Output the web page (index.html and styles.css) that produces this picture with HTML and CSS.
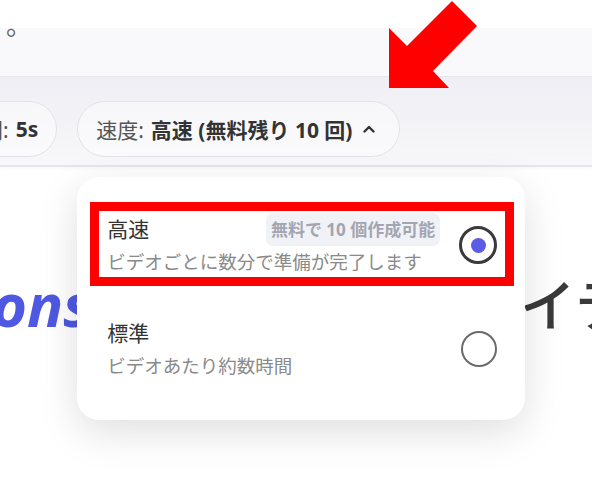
FILE: index.html
```html
<!DOCTYPE html>
<html>
<head>
  <link rel="stylesheet" href="styles.css">
</head>
<body>
  <div class="top"></div>
  <div class="note">
    <p>。</p>
  </div>

  <div class="toolbar">
    <div class="pill pill-first">
      <span class="pill-label">時間:</span>
      <b>5s</b>
    </div>
    <div class="speed-wrap">
      <button class="pill pill-speed" type="button">
        <span class="pill-label">速度:</span>
        <b>高速 (無料残り 10 回)</b>
        <svg class="caret" width="12" height="8" viewBox="0 0 12 8">
          <path d="M1.5 6.5 L6 2 L10.5 6.5" fill="none" stroke="#333" stroke-width="2.4" stroke-linecap="round" stroke-linejoin="round"/>
        </svg>
      </button>

      <div class="menu">
        <div class="option option-marked">
          <div class="option-text">
            <div class="option-head">
              <span class="option-title">高速</span>
              <span class="badge">無料で 10 個作成可能</span>
            </div>
            <div class="option-desc">ビデオごとに数分で準備が完了します</div>
          </div>
          <span class="radio radio-on"></span>
        </div>
        <div class="option">
          <div class="option-text">
            <div class="option-head">
              <span class="option-title">標準</span>
            </div>
            <div class="option-desc">ビデオあたり約数時間</div>
          </div>
          <span class="radio"></span>
        </div>
      </div>
    </div>
  </div>

  <div class="hero">
    <h1><span class="hero-brand">ons</span><span class="hero-rest">イテ</span></h1>
  </div>

  <svg class="arrow" width="592" height="100" viewBox="0 0 592 100">
    <polygon points="389,28 407,46 452,1 477,26 433,71 449,88 389,88" fill="#ff0000"/>
  </svg>
</body>
</html>
```

FILE: styles.css
```css
body {
  margin: 0;
  width: 592px;
  height: 480px;
  overflow: hidden;
  position: relative;
  background: #fff;
  font-family: "Noto Sans", "Noto Sans CJK JP", sans-serif;
  color: #333;
}

.top {
  height: 28px;
  background: #fff;
}

.note {
  height: 48px;
  background: #f9f9fb;
}

.note p {
  margin: 0;
  padding: 0 0 0 6px;
  font-size: 26px;
  line-height: 26px;
  color: #666;
  position: relative;
  top: -16px;
}

.toolbar {
  display: flex;
  gap: 20px;
  padding: 24px 0 8px;
  border-top: 1px solid #e7e7ee;
  border-bottom: 2px solid #e6e6e9;
  background: linear-gradient(#eeeef4, #f8f8fa);
  box-shadow: 0 2px 4px rgba(0, 0, 0, 0.03);
  white-space: nowrap;
}

.pill {
  display: flex;
  align-items: center;
  gap: 7px;
  height: 56px;
  box-sizing: border-box;
  padding: 0 18px;
  border: 1.5px solid #e2e2e8;
  border-radius: 28px;
  background: rgba(255, 255, 255, 0.45);
  font-family: inherit;
  font-size: 21px;
  color: #333;
}

.pill b {
  font-weight: 700;
  color: #333;
}

.pill-label {
  color: #555;
}

.pill-first {
  margin-left: -58px;
  flex-shrink: 0;
}

.speed-wrap {
  position: relative;
}

.pill-speed {
  padding-right: 24px;
  cursor: pointer;
}

.caret {
  margin-left: 3px;
}

.menu {
  position: absolute;
  top: calc(100% + 20px);
  left: 0;
  width: 448px;
  height: 243px;
  box-sizing: border-box;
  padding: 25px 11px 0 13px;
  display: flex;
  flex-direction: column;
  gap: 20px;
  background: #fff;
  border-radius: 22px;
  box-shadow: 0 12px 40px rgba(0, 0, 0, 0.13);
  z-index: 2;
  white-space: normal;
}

.option {
  display: flex;
  align-items: center;
  gap: 19px;
  padding: 4px 8px 2px;
  border: 9px solid transparent;
}

.option-marked {
  border-color: #ff0000;
}

.option-text {
  flex: 1;
}

.option-head {
  height: 28px;
  display: flex;
  align-items: center;
  justify-content: space-between;
}

.option-title {
  font-size: 21px;
  line-height: 28px;
  color: #333;
}

.badge {
  padding: 0 5px;
  height: 33px;
  line-height: 33px;
  border-radius: 7px;
  background: #f1f2f6;
  color: #a3a5b3;
  font-size: 17px;
  font-weight: 700;
}

.option-desc {
  margin-top: 6px;
  font-size: 18.5px;
  line-height: 26px;
  color: #8a8a8a;
}

.radio {
  width: 36px;
  height: 36px;
  box-sizing: border-box;
  border: 2px solid #6b6b6b;
  border-radius: 50%;
  display: flex;
  align-items: center;
  justify-content: center;
}

.radio-on {
  width: 38px;
  height: 38px;
  border: 3px solid #3a3a3a;
}

.radio-on::after {
  content: "";
  width: 15px;
  height: 15px;
  border-radius: 50%;
  background: #5b5ce6;
}

.hero {
  padding-top: 104px;
}

.hero h1 {
  margin: 0;
  display: flex;
  white-space: nowrap;
  font-size: 60px;
  line-height: 66px;
  font-weight: 700;
}

.hero-brand {
  margin-left: -8px;
  font-style: italic;
  color: #4f58e2;
}

.hero-rest {
  margin-left: 428px;
  font-size: 56px;
  font-weight: 500;
  color: #3a3a3a;
}

.arrow {
  position: absolute;
  top: 0;
  left: 0;
  z-index: 3;
}
```
